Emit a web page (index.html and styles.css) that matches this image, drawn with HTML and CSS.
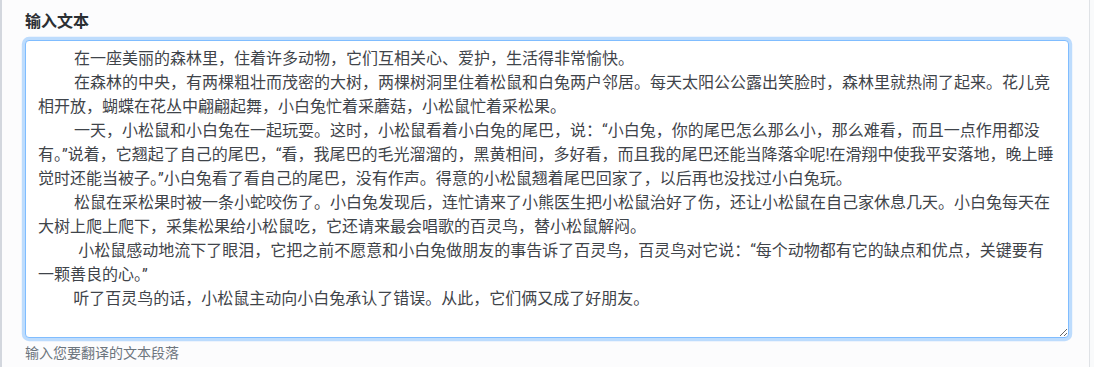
FILE: index.html
```html
<!DOCTYPE html>
<html lang="zh-CN">
<head>
<meta charset="utf-8">
<title>输入文本</title>
<link rel="stylesheet" href="styles.css">
</head>
<body>
<div class="panel">
  <div class="form-group">
    <label class="form-label" for="source">输入文本</label>
    <textarea id="source" class="form-control" autofocus>　　 在一座美丽的森林里，住着许多动物，它们互相关心、爱护，生活得非常愉快。
　　 在森林的中央，有两棵粗壮而茂密的大树，两棵树洞里住着松鼠和白兔两户邻居。每天太阳公公露出笑脸时，森林里就热闹了起来。花儿竞相开放，蝴蝶在花丛中翩翩起舞，小白兔忙着采蘑菇，小松鼠忙着采松果。
　　 一天，小松鼠和小白兔在一起玩耍。这时，小松鼠看着小白兔的尾巴，说：“小白兔，你的尾巴怎么那么小，那么难看，而且一点作用都没有。”说着，它翘起了自己的尾巴，“看，我尾巴的毛光溜溜的，黑黄相间，多好看，而且我的尾巴还能当降落伞呢!在滑翔中使我平安落地，晚上睡觉时还能当被子。”小白兔看了看自己的尾巴，没有作声。得意的小松鼠翘着尾巴回家了，以后再也没找过小白兔玩。
　　 松鼠在采松果时被一条小蛇咬伤了。小白兔发现后，连忙请来了小熊医生把小松鼠治好了伤，还让小松鼠在自己家休息几天。小白兔每天在大树上爬上爬下，采集松果给小松鼠吃，它还请来最会唱歌的百灵鸟，替小松鼠解闷。
　　&ensp;小松鼠感动地流下了眼泪，它把之前不愿意和小白兔做朋友的事告诉了百灵鸟，百灵鸟对它说：“每个动物都有它的缺点和优点，关键要有一颗善良的心。”
　　&thinsp;听了百灵鸟的话，小松鼠主动向小白兔承认了错误。从此，它们俩又成了好朋友。</textarea>
    <small class="form-text">输入您要翻译的文本段落</small>
  </div>
</div>
<script src="app.js"></script>
</body>
</html>
```
FILE: styles.css
```css
html, body {
  margin: 0;
  padding: 0;
  background: #f9fafb;
}

body {
  font-family: "Noto Sans CJK SC", "Noto Sans", sans-serif;
  color: #212529;
}

.panel {
  box-sizing: border-box;
  width: 1090px;
  height: 367px;
  padding: 8px 20px 0 23px;
  background: #fcfcfd;
  border-left: 2px solid #d3d7de;
  border-right: 1px solid #dfe2e6;
}

.form-group {
  display: flex;
  flex-direction: column;
}

.form-label {
  display: block;
  font-size: 16px;
  line-height: 24px;
  font-weight: 700;
  color: #2b2f33;
  margin: 0 0 8px 0;
}

.form-control {
  display: block;
  box-sizing: border-box;
  width: 100%;
  height: 298px;
  margin: 0;
  padding: 6px 12px;
  font-family: Roboto, "Noto Sans CJK SC", sans-serif;
  font-size: 16px;
  line-height: 24px;
  color: #3f444a;
  background: #fff;
  border: 1px solid #80bdff;
  border-radius: 4px;
  box-shadow: 0 0 0 3.2px rgba(0, 123, 255, 0.25);
  outline: none;
  resize: vertical;
}

.form-text {
  display: block;
  margin-top: 4px;
  font-size: 14px;
  line-height: 21px;
  color: #6c757d;
}
```
FILE: app.js
```js
var ta = document.getElementById('source');
ta.focus();
ta.selectionStart = ta.selectionEnd = ta.value.length;
```
